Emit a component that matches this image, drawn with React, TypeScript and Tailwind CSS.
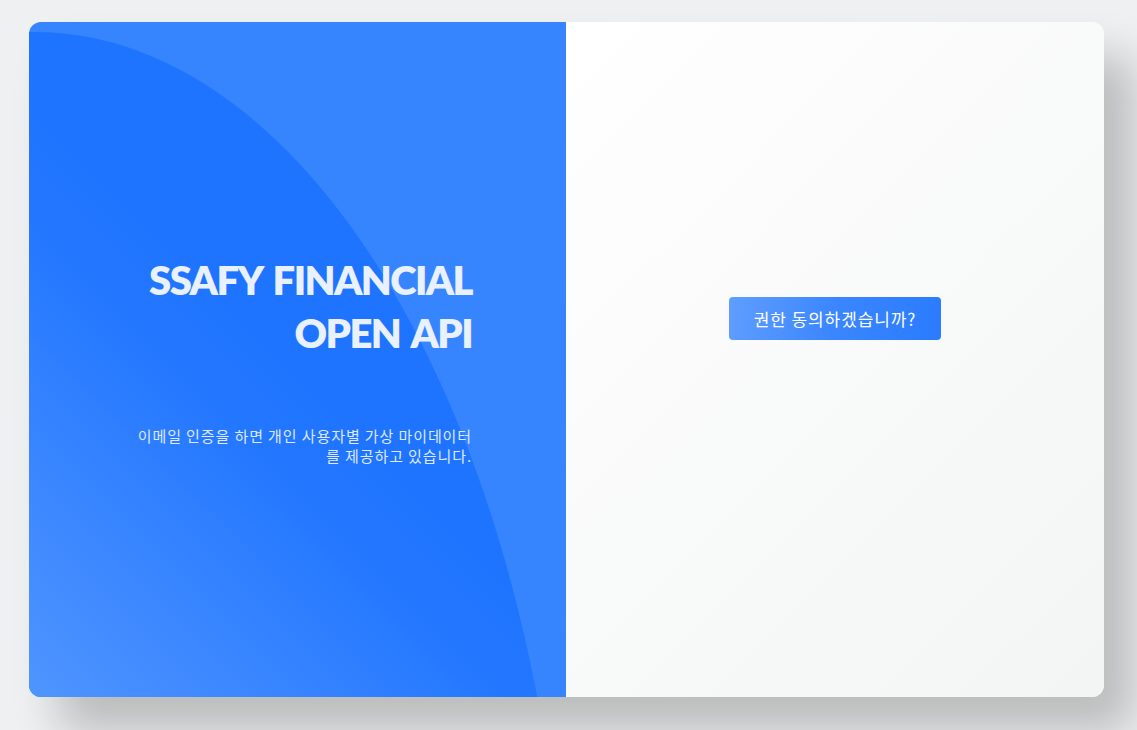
export default function App() {
  return (
    <div className="min-h-[730px] w-full bg-[#eff0f1] pl-[29px] pt-[22px] font-['Noto_Sans','Noto_Sans_CJK_KR',sans-serif]">
      <div className="grid h-[675px] w-[1075px] grid-cols-[537px_538px] overflow-hidden rounded-[12px] shadow-[30px_35px_45px_rgba(0,0,0,0.22)]">
        {/* left: intro */}
        <div className="relative flex flex-col items-end justify-center overflow-hidden bg-[#3685ff] pr-[94px]">
          <svg className="absolute left-0 top-0" width="537" height="675" viewBox="0 0 537 675">
            <defs>
              <linearGradient id="blob" gradientUnits="userSpaceOnUse" x1="0" y1="675" x2="300" y2="375">
                <stop offset="0" stopColor="#4f95ff" />
                <stop offset="0.4" stopColor="#3a86ff" />
                <stop offset="0.8" stopColor="#2377ff" />
                <stop offset="1" stopColor="#1f74ff" />
              </linearGradient>
            </defs>
            <ellipse cx="6" cy="1010" rx="533" ry="1000" fill="url(#blob)" />
          </svg>
          <h1 className="relative text-right font-['Lato',sans-serif] text-[40px] font-extrabold leading-[53px] tracking-[-1.6px] text-[#e9f1ff] [word-spacing:4px]">
            SSAFY FINANCIAL
            <br />
            OPEN API
          </h1>
          <p className="relative mt-[66px] text-right font-['Noto_Sans_CJK_KR',sans-serif] text-[15px] leading-[20px] tracking-[0.9px] text-[#dfe9ff]">
            이메일 인증을 하면 개인 사용자별 가상 마이데이터
            <br />
            를 제공하고 있습니다.
          </p>
        </div>

        {/* right: consent */}
        <div className="flex items-center justify-center bg-[linear-gradient(135deg,#ffffff_0%,#f3f4f4_100%)] pb-[82px]">
          <button className="h-[43px] w-[212px] rounded-[4px] bg-[linear-gradient(100deg,#609eff_0%,#3a86ff_50%,#2a7bff_100%)] font-['Noto_Sans_CJK_KR',sans-serif] text-[17px] font-normal tracking-[0.9px] text-white">
            권한 동의하겠습니까?
          </button>
        </div>
      </div>
    </div>
  );
}
